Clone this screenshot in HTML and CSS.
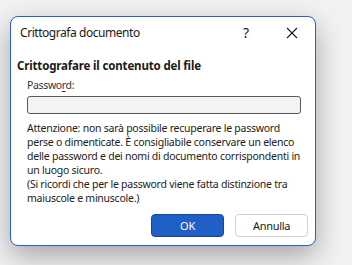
FILE: index.html
```html
<!DOCTYPE html>
<html lang="it">
<head>
    <meta charset="UTF-8">
    <title>Crittografa documento</title>
    <link rel="stylesheet" href="styles.css">
</head>
<body>
    <div class="dialog">
        <div class="titlebar">
            <span class="title">Crittografa documento</span>
            <span class="help">?</span>
            <span class="close">
                <svg width="12" height="12" viewBox="0 0 12 12"><path d="M1 1 L11 11 M11 1 L1 11" stroke="#1a1a1a" stroke-width="1.1" fill="none"/></svg>
            </span>
        </div>
        <h1 class="heading">Crittografare il contenuto del file</h1>
        <div class="content">
            <label class="label">Passwo<u>r</u>d:</label>
            <div class="input"></div>
            <p class="note">Attenzione: non sarà possibile recuperare le password perse o dimenticate. È consigliabile conservare un elenco delle password e dei nomi di documento corrispondenti in un luogo sicuro.<br>(Si ricordi che per le password viene fatta distinzione tra maiuscole e minuscole.)</p>
        </div>
        <div class="buttons">
            <button class="btn btn-primary">OK</button>
            <button class="btn">Annulla</button>
        </div>
    </div>
</body>
</html>
```

FILE: styles.css
```css
* {
    margin: 0;
    padding: 0;
    box-sizing: border-box;
}

body {
    width: 352px;
    height: 265px;
    overflow: hidden;
    background: #f2f2f2;
    font-family: "Noto Sans", "Open Sans", sans-serif;
    color: #1a1a1a;
    padding: 16px 0 0 10px;
}

.dialog {
    width: 306px;
    height: 230px;
    background: #fff;
    border: 1px solid #2760c8;
    border-radius: 8px;
    box-shadow: 0 10px 28px rgba(0, 0, 0, 0.32);
    display: flex;
    flex-direction: column;
}

/* Title bar */
.titlebar {
    display: flex;
    align-items: center;
    height: 31px;
    padding: 0 0 0 9px;
}

.title {
    flex: 1;
    font-size: 12px;
    letter-spacing: -0.45px;
}

.help {
    font-size: 14px;
    width: 46px;
    text-align: center;
}

.close {
    width: 46px;
    display: flex;
    justify-content: center;
}

.heading {
    font-size: 11.5px;
    font-weight: bold;
    letter-spacing: -0.16px;
    padding: 10px 0 0 6px;
}

.content {
    padding: 5px 14px 0 16px;
}

.label {
    display: block;
    font-size: 10.5px;
    letter-spacing: -0.35px;
    color: #333;
}

.label u {
    text-underline-offset: 2px;
}

.input {
    height: 18px;
    margin-top: 4px;
    border: 1px solid #5a5a5a;
    border-radius: 3px;
    background: #f3f3f3;
}

.note {
    font-size: 10.5px;
    letter-spacing: -0.25px;
    line-height: 14px;
    margin-top: 7px;
    color: #222;
}

.buttons {
    display: flex;
    justify-content: flex-end;
    gap: 11px;
    padding: 0 7px 0 0;
    margin-top: auto;
    margin-bottom: 8px;
}

.btn {
    width: 73px;
    height: 23px;
    font-family: inherit;
    font-size: 11px;
    letter-spacing: -0.3px;
    background: #fff;
    border: 1px solid #d0d0d0;
    border-radius: 4px;
    color: #1a1a1a;
}

.btn-primary {
    background: #1f5fc6;
    border-color: #17479a;
    color: #fff;
}
```
